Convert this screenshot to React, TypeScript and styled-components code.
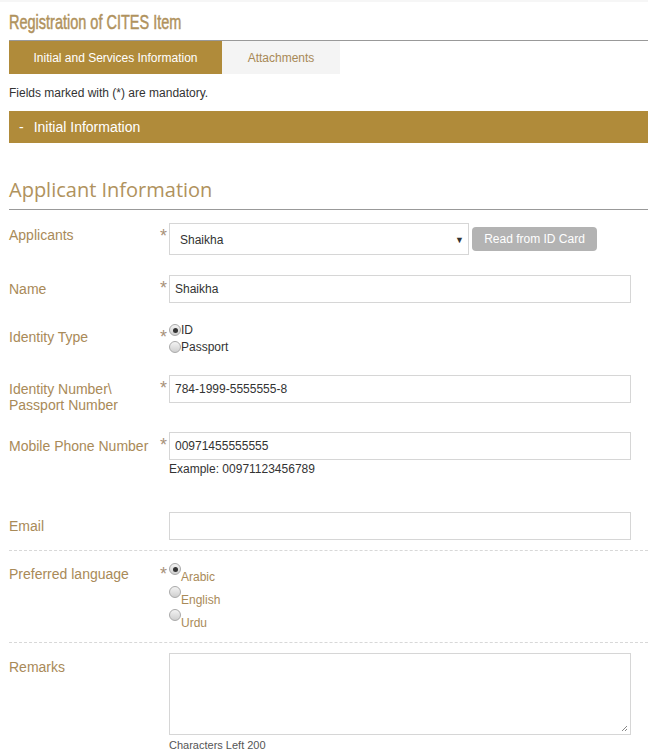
import styled, { createGlobalStyle } from 'styled-components'

const GlobalStyle = createGlobalStyle`
	html, body {
		margin: 0;
		padding: 0;
		background: #fff;
	}
	body {
		font-family: 'Liberation Sans', Arial, sans-serif;
		color: #333;
	}
`

const gold = '#b08b3a'
const labelColor = '#a98a58'

const Page = styled.div`
	width: 648px;
	padding: 0 0 0 9px;
	box-sizing: border-box;
	border-top: 2px solid #f6f6f6;
`

const Title = styled.h1`
	margin: 0;
	padding-top: 9px;
	height: 29px;
	font-weight: 400;
	font-size: 21px;
	line-height: 22px;
	color: #b0925d;
	white-space: nowrap;

	span {
		display: inline-block;
		transform: scaleX(0.69);
		transform-origin: left center;
		-webkit-text-stroke: 0.5px #b0925d;
	}
`

const Tabs = styled.div`
	display: flex;
	border-top: 1px solid #999;
	height: 33px;
`

const Tab = styled.div<{ $active?: boolean }>`
	display: flex;
	align-items: center;
	justify-content: center;
	width: ${p => (p.$active ? '213px' : '118px')};
	background: ${p => (p.$active ? gold : '#f4f4f4')};
	color: ${p => (p.$active ? '#fff' : '#a88956')};
	font-size: 12px;
`

const Note = styled.p`
	margin: 0;
	padding: 12px 0 0;
	height: 25px;
	font-size: 12px;
	line-height: 14px;
	color: #333;
`

const Collapse = styled.div`
	display: flex;
	align-items: center;
	gap: 10px;
	height: 32px;
	padding-left: 10px;
	background: ${gold};
	color: #fff;
	font-size: 14px;
`

const SectionTitle = styled.h2`
	margin: 34px 0 0;
	padding-bottom: 6px;
	font-family: 'Open Sans', sans-serif;
	font-weight: 400;
	font-size: 20px;
	line-height: 26px;
	color: #b0925d;
	border-bottom: 1px solid #999;
`

const Row = styled.div<{ $top: number }>`
	display: flex;
	align-items: flex-start;
	margin-top: ${p => p.$top}px;
`

const Label = styled.div<{ $pad?: number }>`
	width: 151px;
	padding-top: ${p => p.$pad ?? 6}px;
	font-size: 14px;
	line-height: 16px;
	color: ${labelColor};
	flex-shrink: 0;
`

const Star = styled.span<{ $pad?: number }>`
	width: 9px;
	padding-top: ${p => p.$pad ?? 5}px;
	font-size: 18px;
	line-height: 16px;
	color: #a8927a;
	flex-shrink: 0;
`

const Field = styled.div`
	display: flex;
	flex-direction: column;
	width: 462px;
`

const Input = styled.div<{ $h?: number; $w?: number }>`
	box-sizing: border-box;
	height: ${p => p.$h ?? 28}px;
	width: ${p => p.$w ?? 462}px;
	border: 1px solid #d6d6d6;
	padding: 0 5px;
	display: flex;
	align-items: center;
	font-size: 12px;
	color: #333;
	background: #fff;
`

const SelectRow = styled.div`
	display: flex;
	align-items: center;
	gap: 3px;
`

const Select = styled(Input)`
	justify-content: space-between;
	padding: 2px 4px 0 10px;
`

const Caret = styled.span`
	font-size: 9px;
	color: #333;
`

const GreyButton = styled.div`
	height: 24px;
	width: 125px;
	border-radius: 4px;
	background: #b3b3b3;
	color: #fff;
	font-size: 12px;
	display: flex;
	align-items: center;
	justify-content: center;
`

const Hint = styled.div<{ $small?: boolean }>`
	margin-top: ${p => (p.$small ? 4 : 2)}px;
	font-size: ${p => (p.$small ? 11 : 12)}px;
	color: ${p => (p.$small ? '#555' : '#333')};
`

const RadioList = styled.div<{ $gap: number }>`
	display: flex;
	flex-direction: column;
	gap: ${p => p.$gap}px;
`

const RadioItem = styled.div<{ $drop?: boolean }>`
	display: flex;
	align-items: ${p => (p.$drop ? 'flex-start' : 'center')};
	font-size: 12px;
	color: ${p => (p.$drop ? labelColor : '#333')};
	line-height: 14px;
`

const RadioText = styled.span<{ $drop?: boolean }>`
	padding-top: ${p => (p.$drop ? 7 : 0)}px;
`

const RadioDot = styled.span<{ $on?: boolean }>`
	position: relative;
	box-sizing: border-box;
	width: 12px;
	height: 12px;
	border-radius: 50%;
	border: 1px solid #a9a9a9;
	background: linear-gradient(#f3f3f3, #cfcfcf);
	flex-shrink: 0;
	&::after {
		content: '';
		display: ${p => (p.$on ? 'block' : 'none')};
		position: absolute;
		left: 2.5px;
		top: 2.5px;
		width: 5px;
		height: 5px;
		border-radius: 50%;
		background: #333;
	}
`

const Dashed = styled.div<{ $top: number }>`
	margin-top: ${p => p.$top}px;
	border-top: 1px dashed #d8d8d8;
`

const TextArea = styled.div`
	position: relative;
	box-sizing: border-box;
	height: 82px;
	width: 462px;
	border: 1px solid #d6d6d6;
`

const Grip = styled.svg`
	position: absolute;
	right: 2px;
	bottom: 2px;
`

function Radio({ on, text, drop }: { on?: boolean; text: string; drop?: boolean }) {
	return (
		<RadioItem $drop={drop}>
			<RadioDot $on={on} />
			<RadioText $drop={drop}>{text}</RadioText>
		</RadioItem>
	)
}

export default function App() {
	return (
		<Page>
			<GlobalStyle />
			<Title>
				<span>Registration of CITES Item</span>
			</Title>
			<Tabs>
				<Tab $active>Initial and Services Information</Tab>
				<Tab>Attachments</Tab>
			</Tabs>
			<Note>Fields marked with (*) are mandatory.</Note>
			<Collapse>
				<span>-</span>
				<span>Initial Information</span>
			</Collapse>

			<SectionTitle>Applicant Information</SectionTitle>

			<Row $top={13}>
				<Label $pad={4}>Applicants</Label>
				<Star>*</Star>
				<Field>
					<SelectRow>
						<Select $h={32} $w={300}>
							<span>Shaikha</span>
							<Caret>▼</Caret>
						</Select>
						<GreyButton>Read from ID Card</GreyButton>
					</SelectRow>
				</Field>
			</Row>

			<Row $top={20}>
				<Label>Name</Label>
				<Star>*</Star>
				<Field>
					<Input>Shaikha</Input>
				</Field>
			</Row>

			<Row $top={20}>
				<Label $pad={6}>Identity Type</Label>
				<Star $pad={6}>*</Star>
				<Field>
					<RadioList $gap={3}>
						<Radio on text="ID" />
						<Radio text="Passport" />
					</RadioList>
				</Field>
			</Row>

			<Row $top={21}>
				<Label>
					Identity Number\
					<br />
					Passport Number
				</Label>
				<Star>*</Star>
				<Field>
					<Input>784-1999-5555555-8</Input>
				</Field>
			</Row>

			<Row $top={19}>
				<Label>Mobile Phone Number</Label>
				<Star>*</Star>
				<Field>
					<Input>00971455555555</Input>
					<Hint>Example: 00971123456789</Hint>
				</Field>
			</Row>

			<Row $top={36}>
				<Label>Email</Label>
				<Star />
				<Field>
					<Input />
				</Field>
			</Row>

			<Dashed $top={10} />

			<Row $top={12}>
				<Label $pad={3}>Preferred language</Label>
				<Star $pad={3}>*</Star>
				<Field>
					<RadioList $gap={2}>
						<Radio on drop text="Arabic" />
						<Radio drop text="English" />
						<Radio drop text="Urdu" />
					</RadioList>
				</Field>
			</Row>

			<Dashed $top={12} />

			<Row $top={10}>
				<Label $pad={6}>Remarks</Label>
				<Star />
				<Field>
					<TextArea>
						<Grip width="7" height="7" viewBox="0 0 7 7">
							<path d="M6 1 L1 6 M6 4 L4 6" stroke="#888" strokeWidth="1" />
						</Grip>
					</TextArea>
					<Hint $small>Characters Left 200</Hint>
				</Field>
			</Row>
		</Page>
	)
}
